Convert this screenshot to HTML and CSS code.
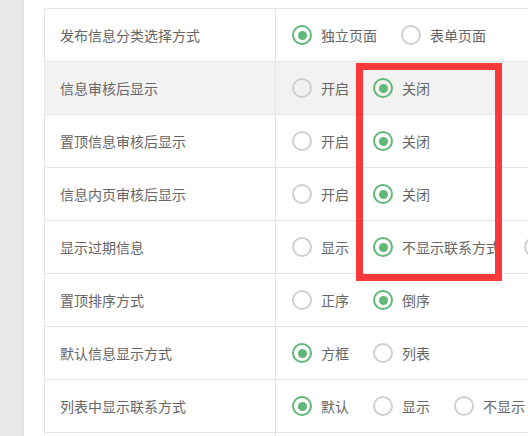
FILE: index.html
```html
<!DOCTYPE html>
<html lang="zh">
<head>
<meta charset="utf-8">
<link rel="stylesheet" href="styles.css">
</head>
<body>
<div class="page">
  <div class="side"></div>
  <div class="main">
    <div class="tbl">
      <div class="row">
        <div class="label">发布信息分类选择方式</div>
        <div class="opts">
          <span class="opt"><i class="radio on"></i>独立页面</span>
          <span class="opt"><i class="radio"></i>表单页面</span>
        </div>
      </div>
      <div class="row hover">
        <div class="label">信息审核后显示</div>
        <div class="opts">
          <span class="opt"><i class="radio"></i>开启</span>
          <span class="opt"><i class="radio on"></i>关闭</span>
        </div>
      </div>
      <div class="row">
        <div class="label">置顶信息审核后显示</div>
        <div class="opts">
          <span class="opt"><i class="radio"></i>开启</span>
          <span class="opt"><i class="radio on"></i>关闭</span>
        </div>
      </div>
      <div class="row">
        <div class="label">信息内页审核后显示</div>
        <div class="opts">
          <span class="opt"><i class="radio"></i>开启</span>
          <span class="opt"><i class="radio on"></i>关闭</span>
        </div>
      </div>
      <div class="row">
        <div class="label">显示过期信息</div>
        <div class="opts">
          <span class="opt"><i class="radio"></i>显示</span>
          <span class="opt"><i class="radio on"></i>不显示联系方式</span>
          <span class="opt"><i class="radio"></i>不显示</span>
        </div>
      </div>
      <div class="row">
        <div class="label">置顶排序方式</div>
        <div class="opts">
          <span class="opt"><i class="radio"></i>正序</span>
          <span class="opt"><i class="radio on"></i>倒序</span>
        </div>
      </div>
      <div class="row">
        <div class="label">默认信息显示方式</div>
        <div class="opts">
          <span class="opt"><i class="radio on"></i>方框</span>
          <span class="opt"><i class="radio"></i>列表</span>
        </div>
      </div>
      <div class="row">
        <div class="label">列表中显示联系方式</div>
        <div class="opts">
          <span class="opt"><i class="radio on"></i>默认</span>
          <span class="opt"><i class="radio"></i>显示</span>
          <span class="opt"><i class="radio"></i>不显示</span>
        </div>
      </div>
      <div class="row">
        <div class="label"></div>
        <div class="opts"></div>
      </div>
    </div>
  </div>
</div>
<div class="mark"></div>
</body>
</html>
```

FILE: styles.css
```css
html, body {
  margin: 0;
  padding: 0;
  overflow: hidden;
  background: #fff;
}
body {
  font-family: "Noto Sans CJK SC", "Microsoft YaHei", sans-serif;
  font-size: 14px;
  color: #666;
  width: 528px;
  height: 436px;
  position: relative;
}
.page {
  display: flex;
  height: 436px;
}
.side {
  width: 23px;
  flex: none;
  background: #e8e8e8;
  border-right: 1px solid #e2e2e2;
}
.main {
  padding: 8px 0 0 20px;
  flex: none;
}
.tbl {
  width: 900px;
  border-top: 1px solid #e6e6e6;
  border-left: 1px solid #e6e6e6;
}
.row {
  display: flex;
  height: 52px;
  border-bottom: 1px solid #e6e6e6;
}
.row.hover {
  background: #f2f2f2;
}
.label {
  box-sizing: border-box;
  width: 231px;
  flex: none;
  padding-left: 15px;
  border-right: 1px solid #e6e6e6;
  display: flex;
  align-items: center;
}
.opts {
  display: flex;
  align-items: center;
  padding-left: 16px;
  white-space: nowrap;
}
.opt {
  display: flex;
  align-items: center;
  margin-right: 24px;
}
.radio {
  box-sizing: border-box;
  width: 20px;
  height: 20px;
  border: 2px solid #cfcfcf;
  border-radius: 50%;
  margin-right: 9px;
  display: flex;
  align-items: center;
  justify-content: center;
}
.radio.on {
  border-color: #5fb878;
}
.radio.on::after {
  content: "";
  width: 9px;
  height: 9px;
  border-radius: 50%;
  background: #5fb878;
}
.mark {
  position: absolute;
  left: 356px;
  top: 63px;
  width: 146px;
  height: 218px;
  box-sizing: border-box;
  border: 7px solid #fa3a3a;
}
```
